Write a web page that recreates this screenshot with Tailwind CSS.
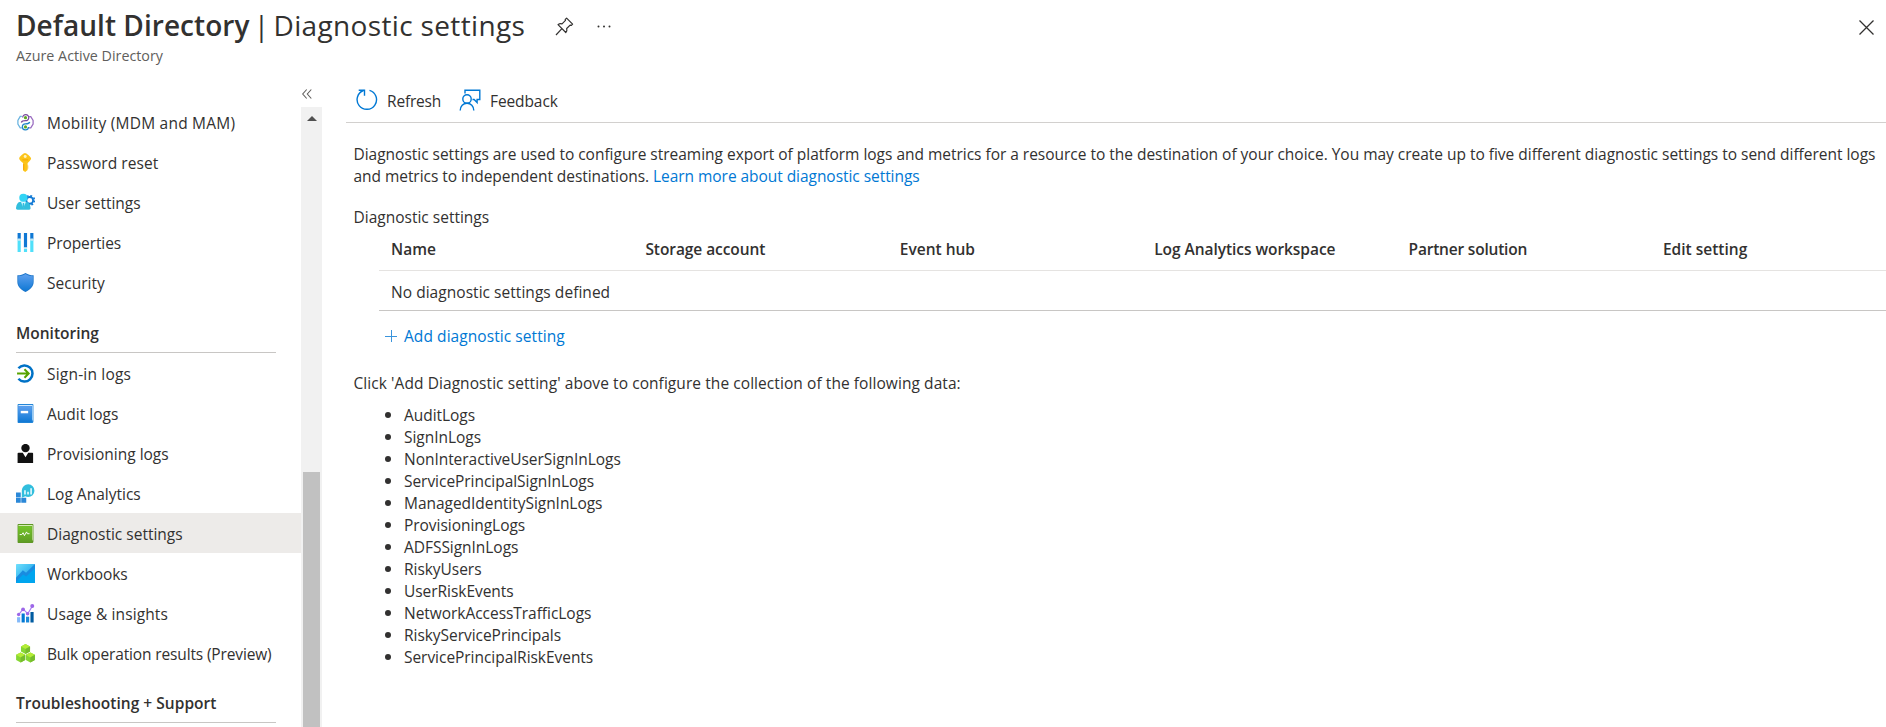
<!DOCTYPE html>
<html lang="en">
<head>
<meta charset="utf-8">
<title>Default Directory | Diagnostic settings</title>
<script src="https://cdn.jsdelivr.net/npm/@tailwindcss/browser@4"></script>
</head>
<body class="flex h-[727px] w-[1886px] flex-col overflow-hidden bg-white font-['Open_Sans','Noto_Sans',sans-serif] text-[15.5px] leading-[22px] text-[#323130]">

<header class="flex h-[83px] shrink-0 items-start justify-between pl-4 pr-3">
  <div>
    <div class="flex h-[45px] items-center pt-[7px]">
      <h1 class="-mt-0.5 flex whitespace-pre text-[28px] leading-[38px]"><span class="font-semibold tracking-[0.05px]">Default Directory</span><span class="w-[24px] text-center">|</span><span class="tracking-[0.35px]">Diagnostic settings</span></h1>
      <svg class="ml-[30px]" width="19" height="19" viewBox="0 0 19 19" fill="none" stroke="#323130" stroke-width="1.2" stroke-linejoin="round"><path d="M11.600 1.200l6 6-1.200 1.200-1.300-.3-3.400 3.400c.5 1.800.2 2.900-.9 4L3 7.700c1.200-1 2.300-1.300 4-.8l3.500-3.500-.3-1z"/><path d="M6.900 11.700L1 18"/></svg>
      <svg class="ml-[22px]" width="16" height="4" viewBox="0 0 16 4" fill="#323130"><circle cx="2.500" cy="2.500" r="1"/><circle cx="8" cy="2.500" r="1"/><circle cx="13.500" cy="2.500" r="1"/></svg>
    </div>
    <div class="text-[14.3px] leading-[21px] text-[#605e5c]">Azure Active Directory</div>
  </div>
  <svg class="mt-5" width="15" height="15" viewBox="0 0 15 15" stroke="#323130" stroke-width="1.300"><path d="M.5.5l14 14M14.500.5l-14 14"/></svg>
</header>

<div class="flex min-h-0 flex-1">
  <aside class="flex w-[346px] shrink-0 flex-col">
    <div class="flex h-5 shrink-0 justify-end pr-[34px] pt-1.5"><svg width="10" height="10" viewBox="0 0 10 10" fill="none" stroke="#605e5c" stroke-width="1.100"><path d="M4.700.5L.7 5l4 4.500M9.300.5l-4 4.500 4 4.500"/></svg></div>
    <div class="flex min-h-0 flex-1">
      <nav class="w-[301px] overflow-hidden [&_a]:flex [&_a]:h-10 [&_a]:items-center [&_a]:gap-[12px] [&_a]:pl-4 [&_a]:whitespace-nowrap [&_a>svg]:size-[19px] [&_a>svg]:shrink-0 [&_a>svg]:-mt-px [&_h2]:mr-[25px] [&_h2]:ml-4 [&_h2]:h-[50px] [&_h2]:border-b [&_h2]:border-[#c8c6c4] [&_h2]:pt-[19px] [&_h2]:font-semibold">
        <a class="tracking-[0.22px]"><svg viewBox="0 0 18 18" fill="none" stroke-width="1.200"><path d="M5.500 3.200H4L1.800 7v3.500L4 14h1.500" stroke="#6ab4e0"/><path d="M12.500 3.500H14L16.200 7v3.500L14 14h-2" stroke="#9a6cc0"/><path d="M6.300 4.300a2.900 2.900 0 1 1 2.700 3c-1.800 0-3.500.2-4 1.700" stroke="#7b4a9e"/><path d="M11.800 13.200a2.900 2.900 0 1 1-2.800-3c1.800 0 3.600-.1 4-1.700" stroke="#1f86c8"/><circle cx="9" cy="4.400" r="1.500" fill="#5ea823"/><circle cx="9" cy="13.200" r="1.500" fill="#5ea823"/></svg>Mobility (MDM and MAM)</a>
        <a class="tracking-[0.05px]"><svg viewBox="0 0 18 18"><path d="M8.500 0c1 0 5.800 3.600 5.800 5.200S11.700 8.600 11 9.500v6.700L8.700 18l-2-1.500V9.500C5.800 8.500 3 7 3 5.200S7.500 0 8.500 0z" fill="#fcc419"/><path d="M7.300 10.500v5.500" stroke="#f59f00" stroke-width=".9"/><path d="M11 11.500l1 .8-1 .9 1 .9-1 .9z" fill="#fab005"/><circle cx="8.700" cy="3.300" r="1.400" fill="#fff3bf"/><path d="M6 6.500h5.500" stroke="#f5a800"/></svg>Password reset</a>
        <a class="tracking-[-0.05px]"><svg viewBox="0 0 18 18"><g fill="none" stroke="#0f78d4"><circle cx="13" cy="7" r="3.200" stroke-width="1.700"/><circle cx="13" cy="7" r="4.500" stroke-width="1.500" stroke-dasharray="1.770 1.765"/></g><path d="M0 14.500c.3-3.500 1.500-6.300 4.500-6.300h5c3 0 4 2.800 4.300 6.300 0 .7-.5 1.300-1.300 1.300h-11c-.9 0-1.500-.5-1.500-1.300z" fill="#32bedd"/><path d="M4.700 8.200h4.700L7 14.500z" fill="#d8f7ff"/><path d="M6.500 9.500h1.200l.5 3.500-1.100 1.500L6 13z" fill="#32bedd"/><circle cx="7" cy="4.500" r="3.900" fill="#32d4f5"/></svg>User settings</a>
        <a class="tracking-[-0.1px]"><svg viewBox="0 0 18 18"><path d="M1.500 0h3v6h-3zM7.500 0h3v14h-3zM13.500 0h3v6h-3z" fill="#0f78d4"/><path d="M1.500 6h3v12h-3zM7.500 15h3v3h-3zM13.500 6h3v12h-3z" fill="#50e0fa"/><path d="M1.500 5.300h3v2h-3zM7.500 13.500h3v1.500h-3zM13.500 5.300h3v2h-3z" fill="#c3e7f5"/></svg>Properties</a>
        <a><svg viewBox="0 0 18 18"><defs><linearGradient id="sh" x2="0" y2="1"><stop stop-color="#5ea0ef"/><stop offset="1" stop-color="#0f78d4"/></linearGradient></defs><path d="M9 0c2.500 1.700 4.800 2.200 7.700 2.200v6.300c0 4.700-3.700 7.500-7.700 9.500-4-2-7.700-4.800-7.700-9.500V2.200C4.200 2.200 6.500 1.700 9 0z" fill="#1b75c9"/><path d="M9 .9c2.300 1.500 4.500 2 7 2.100v5.500c0 4.200-3.300 6.700-7 8.600-3.700-1.900-7-4.400-7-8.600V3C4.500 2.900 6.700 2.400 9 .9z" fill="url(#sh)"/></svg>Security</a>
        <h2>Monitoring</h2>
        <a class="pt-px tracking-[0.2px]"><svg viewBox="0 0 18 18" fill="none"><path d="M2.300 4A7.600 7.600 0 1 1 2.300 14" stroke="#0072c6" stroke-width="2.400"/><path d="M1 9h10.500M8 5l4 4-4 4" stroke="#57a300" stroke-width="1.900"/></svg>Sign-in logs</a>
        <a class="pt-px"><svg viewBox="0 0 18 18"><path d="M2.500 0h13c.6 0 1 .4 1 1v15.500c0 .8-.5 1.500-1.300 1.500H2.500c-.6 0-1-.4-1-1V1c0-.6.400-1 1-1z" fill="#2486d8"/><path d="M2.300 1h13.500v13.500c0 .7-.3 1.200-.7 1.500V2H2.300z" fill="#cfe8ff"/><path d="M2 2h13v15.200H2z" fill="url(#sh)"/><path d="M4.500 6.500h7v2.300h-7z" fill="#fff"/></svg>Audit logs</a>
        <a class="pt-px"><svg viewBox="0 0 18 18" fill="#111"><circle cx="9" cy="3.900" r="4"/><path d="M1.500 18V9c0-.5.400-.8.900-.8h4L9 12.500l2.600-4.300h3.500c.7 0 1.100.3 1.100.8v9z"/></svg>Provisioning logs</a>
        <a class="pt-px"><svg viewBox="0 0 18 18"><path d="M0 8h4.500v4.500H0zM0 13h4.500v4.700H0zM5 13h4.700v4.700H5z" fill="#2b88d8"/><path d="M5.500 13V6A6 6 0 1 1 11.500 12.300c-1 0-2-.3-2.700-.7-1 .6-2 1-3.300 1.400z" fill="#32bedd"/><path d="M8.500 6v4M11.400 7.300V10M14.300 4v6" stroke="#e8fbff" stroke-width="1.500"/></svg>Log Analytics</a>
        <a class="bg-[#edebe9] pt-px"><svg viewBox="0 0 18 18"><defs><linearGradient id="gb" x2="0" y2="1"><stop stop-color="#76c62b"/><stop offset="1" stop-color="#5e9c24"/></linearGradient></defs><path d="M2.500 0h13c.6 0 1 .4 1 1v15.500c0 .8-.5 1.500-1.300 1.500H2.500c-.6 0-1-.4-1-1V1c0-.6.400-1 1-1z" fill="#5e9624"/><path d="M2.300 1h13.500v13.500c0 .7-.3 1.200-.7 1.500V2H2.300z" fill="#d5ecb4"/><path d="M2 2h13v15.200H2z" fill="url(#gb)"/><path d="M3.500 10h2l1.200-1.700 1.300 2.700L10 7.500l.8 1.700h2" fill="none" stroke="#fff" stroke-width=".9"/></svg>Diagnostic settings</a>
        <a class="pt-px tracking-[-0.15px]"><svg viewBox="0 0 18 18"><defs><linearGradient id="wb" x2="1" y2="1"><stop stop-color="#71e0fc"/><stop offset="1" stop-color="#0090e5"/></linearGradient></defs><rect width="18" height="18" rx=".6" fill="url(#wb)"/><path d="M0 13l6.500-7 3 2.300L18 0v18H0z" fill="#198ce0"/><path d="M0 17l6.700-7 3 1.800L18 4v13.400a.6.6 0 0 1-.6.600H0z" fill="#00a5ee"/></svg>Workbooks</a>
        <a class="pt-px tracking-[0.1px]"><svg viewBox="0 0 18 18"><path d="M1 12.500h3V17.500H1z" fill="#83b9f9"/><path d="M5.300 9h3v8.500h-3z" fill="#0078d4"/><path d="M9.500 12h3v5.500h-3z" fill="#1988d9"/><path d="M13.700 7.500h3v10h-3z" fill="#005ba1"/><path d="M2.500 10L6.700 4.800l4.500 4.300L15.500 2" fill="none" stroke="#a67af4" stroke-width="1"/><g fill="#9d67e8"><circle cx="2.500" cy="10" r="1.600"/><circle cx="6.700" cy="5" r="1.800"/><circle cx="11" cy="9.200" r="1.700"/><circle cx="15.400" cy="2" r="1.900"/></g></svg>Usage &amp; insights</a>
        <a class="pt-px tracking-[-0.14px]"><svg viewBox="0 0 18 18"><defs><g id="cube"><path d="M0-4.600L4.300-2.300V2.500L0 4.900-4.300 2.500V-2.300z" fill="#86d633"/><path d="M0-4.600L4.300-2.300 0 .1-4.300-2.300z" fill="#b4ec36"/><path d="M0 .1l4.300-2.400V2.500L0 4.900z" fill="#76bc2d"/></g></defs><use href="#cube" x="9" y="4.600"/><use href="#cube" x="4.400" y="12.600"/><use href="#cube" x="13.600" y="12.600"/></svg>Bulk operation results (Preview)</a>
        <h2 class="tracking-[0.03px]">Troubleshooting + Support</h2>
      </nav>
      <div class="mt-1 flex w-[21px] flex-col items-center bg-[#f1f1f1]">
        <svg class="mt-[9px]" width="10" height="5" viewBox="0 0 10 5"><path d="M0 5L5 0l5 5z" fill="#505050"/></svg>
        <div class="mt-[351px] w-[17px] flex-1 bg-[#c1c1c1]"></div>
      </div>
    </div>
  </aside>

  <main class="flex min-w-0 flex-1 flex-col">
    <div class="flex h-10 shrink-0 items-center border-b border-[#d2d0ce] pb-1 pl-2.5">
      <svg class="-mt-0.5" width="22" height="22" viewBox="0 0 22 22" fill="none" stroke="#0078d4" stroke-width="1.400"><path d="M13.500 1.300A9.700 9.700 0 1 1 7.500 1.500"/><path d="M2.700 1.200h5.800v5.600"/></svg>
      <span class="ml-[9px] w-[71px] tracking-[-0.18px]">Refresh</span>
      <svg class="-mt-0.5 ml-px" width="22" height="22" viewBox="0 0 22 22" fill="none" stroke="#0078d4" stroke-width="1.400"><path d="M6 4.500V1.200h14.800V10.500h-2.700v3l-3-3h-1.600"/><circle cx="8" cy="10" r="4.200"/><path d="M1.200 21.500c0-4.200 3-7.300 6.800-7.300s6.800 3.100 6.800 7.300"/></svg>
      <span class="ml-[9px] tracking-[-0.1px]">Feedback</span>
    </div>
    <div class="pl-[7.500px] pt-[20px]">
      <p class="whitespace-nowrap tracking-[-0.02px]">Diagnostic settings are used to configure streaming export of platform logs and metrics for a resource to the destination of your choice. You may create up to five different diagnostic settings to send different logs<br><span class="tracking-[-0.05px]">and metrics to independent destinations. <a class="text-[#0078d4]">Learn more about diagnostic settings</a></span></p>
      <p class="mt-[19px]">Diagnostic settings</p>
      <div class="ml-[25.500px]">
        <div class="grid h-[43px] grid-cols-[repeat(5,254.400px)_1fr] border-b border-[#e5e3e1] pl-3 pt-[10px] font-semibold whitespace-nowrap">
          <span>Name</span><span class="tracking-[-0.07px]">Storage account</span><span>Event hub</span><span class="tracking-[-0.05px]">Log Analytics workspace</span><span class="tracking-[-0.2px]">Partner solution</span><span>Edit setting</span>
        </div>
        <div class="h-10 border-b border-[#c8c6c4] pl-3 pt-[10px] tracking-[0.04px]">No diagnostic settings defined</div>
        <a class="mt-[14px] flex items-center pl-[6px] tracking-[0.07px] text-[#0078d4]"><svg class="-mt-px mr-[7px]" width="12" height="12" viewBox="0 0 12 12" stroke="#3a94dc" stroke-width="1"><path d="M0 6.500h12M6.500 0v12"/></svg>Add diagnostic setting</a>
      </div>
      <p class="mt-[25px] tracking-[0.07px]">Click 'Add Diagnostic setting' above to configure the collection of the following data:</p>
      <ul class="mt-[10px] pl-[31.500px] [&>li]:flex [&>li]:items-center [&>li]:gap-[13px] [&>li]:tracking-[-0.04px] [&>li]:before:size-[6px] [&>li]:before:rounded-full [&>li]:before:bg-[#323130] [&>li]:before:content-['']">
        <li>AuditLogs</li>
        <li>SignInLogs</li>
        <li>NonInteractiveUserSignInLogs</li>
        <li>ServicePrincipalSignInLogs</li>
        <li>ManagedIdentitySignInLogs</li>
        <li>ProvisioningLogs</li>
        <li>ADFSSignInLogs</li>
        <li>RiskyUsers</li>
        <li>UserRiskEvents</li>
        <li>NetworkAccessTrafficLogs</li>
        <li>RiskyServicePrincipals</li>
        <li>ServicePrincipalRiskEvents</li>
      </ul>
    </div>
  </main>
</div>
</body>
</html>
